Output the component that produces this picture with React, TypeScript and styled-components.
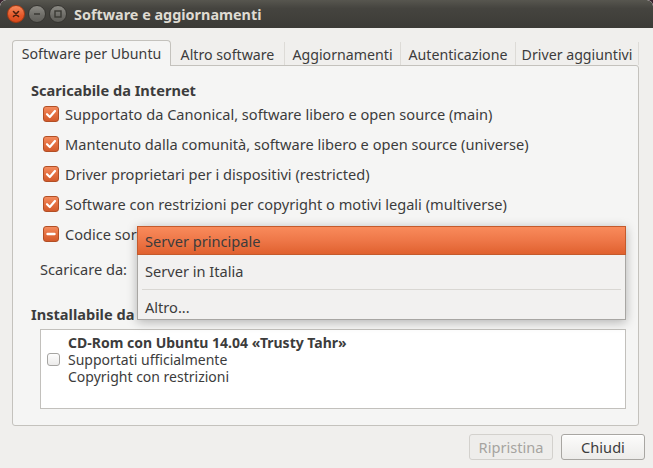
import styled, { createGlobalStyle } from "styled-components";

const FONT = `"Noto Sans", "DejaVu Sans", sans-serif`;
const SIZE = "14.6px";

const Global = createGlobalStyle`
  html, body {
    margin: 0;
    padding: 0;
    background: #3a2530;
  }
  body {
    font-family: ${FONT};
    font-size: ${SIZE};
    color: #3c3c3c;
  }
`;

const Window = styled.div`
  position: relative;
  width: 653px;
  height: 468px;
  display: flex;
  flex-direction: column;
  overflow: hidden;
  border-radius: 6px 6px 0 0;
  background: #f0efed;
`;

const TitleBar = styled.div`
  height: 28px;
  flex: none;
  display: flex;
  align-items: center;
  padding-left: 7px;
  background: linear-gradient(#57564f, #45443f 30%, #3c3b37);
  border-radius: 6px 6px 0 0;
`;

const WinButtons = styled.div`
  display: flex;
  gap: 3px;
  margin-right: 7px;
`;

const WinButton = styled.div<{ $close?: boolean }>`
  width: 16px;
  height: 16px;
  border-radius: 50%;
  display: flex;
  align-items: center;
  justify-content: center;
  border: 1px solid ${p => (p.$close ? "#a83a12" : "#363531")};
  background: ${p =>
    p.$close
      ? "linear-gradient(#f58a5c, #e5582a 60%, #d84a1c)"
      : "linear-gradient(#8c8b85, #6d6c67 60%, #5f5e59)"};
`;

const Title = styled.div`
  font-weight: bold;
  font-size: 14.4px;
  color: #dfdbd2;
`;

const Body = styled.div`
  flex: 1;
  display: flex;
  flex-direction: column;
  padding: 12px 8px 8px 12px;
`;

const Notebook = styled.div`
  width: 627px;
  display: flex;
  flex-direction: column;
`;

const TabRow = styled.div`
  display: flex;
  height: 25px;
  align-items: flex-end;
`;

const Tab = styled.div<{ $active?: boolean; $w: number }>`
  width: ${p => p.$w}px;
  height: ${p => (p.$active ? 26 : 23)}px;
  box-sizing: border-box;
  display: flex;
  align-items: center;
  justify-content: center;
  white-space: nowrap;
  font-size: 14.2px;
  color: #3c3c3c;
  position: relative;
  ${p =>
    p.$active
      ? `
    background: #f5f5f4;
    border: 1px solid #c4c2bd;
    border-bottom: none;
    border-radius: 4px 4px 0 0;
    margin-bottom: -1px;
    z-index: 1;
    padding-bottom: 1px;
  `
      : `
    border-right: 1px solid #dddbd7;
    padding-top: 1px;
  `}
`;

const Page = styled.div`
  height: 361px;
  box-sizing: border-box;
  background: #f5f5f4;
  border: 1px solid #c4c2bd;
  border-radius: 0 3px 3px 3px;
  padding: 15px 12px 0 18px;
  display: flex;
  flex-direction: column;
`;

const Heading = styled.div`
  font-weight: bold;
  line-height: 18px;
  height: 18px;
  white-space: nowrap;
`;

const CheckRow = styled.div`
  height: 30px;
  display: flex;
  align-items: center;
  gap: 6px;
  padding-left: 12px;
  white-space: nowrap;
`;

const OrangeBox = styled.div`
  width: 16px;
  height: 16px;
  box-sizing: border-box;
  border-radius: 3px;
  border: 1px solid #b24f25;
  background: linear-gradient(#f48c5e, #e26c3d 55%, #d35a2b);
  display: flex;
  align-items: center;
  justify-content: center;
  flex: none;
`;

const PlainBox = styled.div`
  width: 13px;
  height: 13px;
  box-sizing: border-box;
  border-radius: 3px;
  border: 1px solid #a6a5a2;
  background: linear-gradient(#fdfdfd, #ecebea);
  flex: none;
`;

const SourceRow = styled.div`
  height: 30px;
  margin-top: 5px;
  display: flex;
  align-items: center;
  padding-left: 9px;
`;

const CdHeading = styled(Heading)`
  margin-top: 21px;
`;

const CdList = styled.div`
  margin: 6px 0 0 9px;
  height: 80px;
  box-sizing: border-box;
  background: #ffffff;
  border: 1px solid #c2c0bc;
  display: flex;
  align-items: flex-start;
  padding: 4px 0 0 6px;
`;

const CdCheckCell = styled.div`
  height: 50px;
  display: flex;
  align-items: center;
  margin-right: 8px;
`;

const CdText = styled.div`
  font-size: 14px;
  line-height: 17px;
  display: flex;
  flex-direction: column;
`;

const Bold = styled.span`
  font-weight: bold;
`;

const ButtonBar = styled.div`
  display: flex;
  justify-content: flex-end;
  gap: 8px;
  margin-top: 8px;
`;

const Button = styled.div<{ $disabled?: boolean }>`
  width: 84px;
  height: 26px;
  box-sizing: border-box;
  border-radius: 3px;
  display: flex;
  align-items: center;
  justify-content: center;
  border: 1px solid ${p => (p.$disabled ? "#d3d1cd" : "#a8a6a2")};
  color: ${p => (p.$disabled ? "#a6a4a0" : "#3c3c3c")};
  background: ${p =>
    p.$disabled ? "#eeedeb" : "linear-gradient(#fcfcfb, #ecebe9)"};
  box-shadow: ${p => (p.$disabled ? "none" : "inset 0 1px 0 #ffffff")};
`;

const Menu = styled.div`
  position: absolute;
  left: 137px;
  top: 226px;
  width: 489px;
  height: 94px;
  box-sizing: border-box;
  background: #f2f1f0;
  border: 1px solid #a8a6a3;
  box-shadow: 0 2px 10px rgba(0, 0, 0, 0.28);
  display: flex;
  flex-direction: column;
  z-index: 5;
`;

const MenuItem = styled.div<{ $hot?: boolean; $h: number }>`
  height: ${p => p.$h}px;
  box-sizing: border-box;
  flex: none;
  display: flex;
  align-items: center;
  padding-left: 7px;
  color: #3c3c3c;
  ${p =>
    p.$hot &&
    `
    margin: -1px -1px 0;
    border: 1px solid #c45a2c;
    background: linear-gradient(#f98b5b, #ee7748 50%, #e0612f);
  `}
`;

const MenuSeparator = styled.div`
  height: 1px;
  flex: none;
  margin: 3px 4px 5px;
  background: #d9d7d3;
`;

const Check = () => (
  <svg width="12" height="12" viewBox="0 0 12 12">
    <path d="M2 6.2 L4.8 9 L10 3" fill="none" stroke="#ffffff" strokeWidth="2.2" strokeLinecap="round" strokeLinejoin="round" />
  </svg>
);

const Dash = () => (
  <svg width="12" height="12" viewBox="0 0 12 12">
    <path d="M2.5 6 H9.5" stroke="#ffffff" strokeWidth="2.4" strokeLinecap="round" />
  </svg>
);

const sources = [
  { label: "Supportato da Canonical, software libero e open source (main)", state: "on" },
  { label: "Mantenuto dalla comunità, software libero e open source (universe)", state: "on" },
  { label: "Driver proprietari per i dispositivi (restricted)", state: "on" },
  { label: "Software con restrizioni per copyright o motivi legali (multiverse)", state: "on" },
  { label: "Codice sorgente", state: "mixed" },
];

const tabs = [
  { title: "Software per Ubuntu", w: 159 },
  { title: "Altro software", w: 114 },
  { title: "Aggiornamenti", w: 116 },
  { title: "Autenticazione", w: 115 },
  { title: "Driver aggiuntivi", w: 123 },
];

export default function App() {
  return (
    <Window>
      <Global />
      <TitleBar>
        <WinButtons>
          <WinButton $close>
            <svg width="8" height="8" viewBox="0 0 8 8">
              <path d="M1.5 1.5 L6.5 6.5 M6.5 1.5 L1.5 6.5" stroke="#4a1f0e" strokeWidth="1.6" strokeLinecap="round" />
            </svg>
          </WinButton>
          <WinButton>
            <svg width="8" height="8" viewBox="0 0 8 8">
              <path d="M1 4 H7" stroke="#3a3934" strokeWidth="1.6" />
            </svg>
          </WinButton>
          <WinButton>
            <svg width="8" height="8" viewBox="0 0 8 8">
              <rect x="1" y="1" width="6" height="6" fill="none" stroke="#3a3934" strokeWidth="1.4" />
            </svg>
          </WinButton>
        </WinButtons>
        <Title>Software e aggiornamenti</Title>
      </TitleBar>
      <Body>
        <Notebook>
          <TabRow>
            {tabs.map((t, i) => (
              <Tab key={t.title} $active={i === 0} $w={t.w}>
                {t.title}
              </Tab>
            ))}
          </TabRow>
          <Page>
            <Heading>Scaricabile da Internet</Heading>
            {sources.map(s => (
              <CheckRow key={s.label}>
                <OrangeBox>{s.state === "on" ? <Check /> : <Dash />}</OrangeBox>
                {s.label}
              </CheckRow>
            ))}
            <SourceRow>Scaricare da:</SourceRow>
            <CdHeading>Installabile da CD-Rom/DVD</CdHeading>
            <CdList>
              <CdCheckCell>
                <PlainBox />
              </CdCheckCell>
              <CdText>
                <Bold>CD-Rom con Ubuntu 14.04 «Trusty Tahr»</Bold>
                <span>Supportati ufficialmente</span>
                <span>Copyright con restrizioni</span>
              </CdText>
            </CdList>
          </Page>
        </Notebook>
        <ButtonBar>
          <Button $disabled>Ripristina</Button>
          <Button>Chiudi</Button>
        </ButtonBar>
      </Body>
      <Menu>
        <MenuItem $hot $h={29}>Server principale</MenuItem>
        <MenuItem $h={31}>Server in Italia</MenuItem>
        <MenuSeparator />
        <MenuItem $h={24}>Altro...</MenuItem>
      </Menu>
    </Window>
  );
}
